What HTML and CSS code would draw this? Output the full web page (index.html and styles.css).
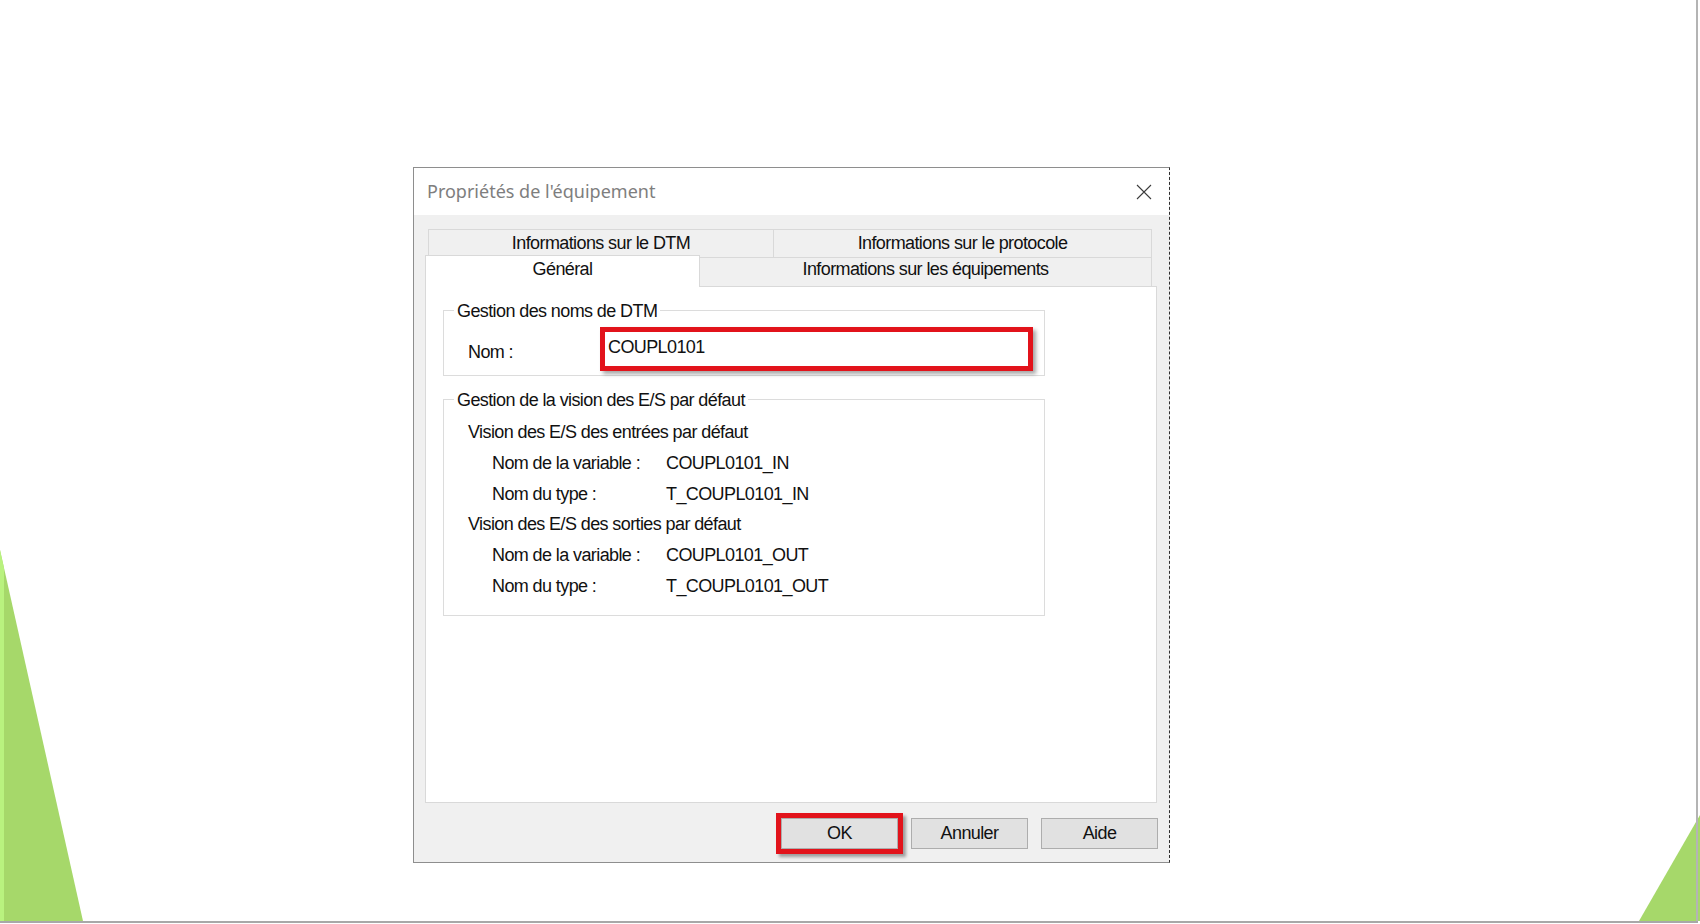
FILE: index.html
```html
<!DOCTYPE html>
<html lang="fr">
<head>
<meta charset="utf-8">
<title>Propriétés de l'équipement</title>
<link rel="stylesheet" href="styles.css">
</head>
<body>
<div class="slide">
  <svg class="deco" width="1700" height="924" viewBox="0 0 1700 924">
    <polygon points="0,550 83,921 0,921" fill="#a6d86a"/>
    <polygon points="0,550 4,568 4,921 0,921" fill="#b9f27f"/>
    <polygon points="1700,815 1700,921 1639,921" fill="#a6d86a"/>
    <rect x="1696" y="0" width="2" height="921" fill="#b4b4b4"/>
    <rect x="0" y="921" width="1698" height="2" fill="#a8a8a8"/>
  </svg>

  <div class="dialog">
    <div class="titlebar">
      <span class="title">Propriétés de l'équipement</span>
      <svg class="close" width="16" height="16" viewBox="0 0 16 16">
        <path d="M1 1 L15 15 M15 1 L1 15" stroke="#3c3c3c" stroke-width="1.1" fill="none"/>
      </svg>
    </div>
    <div class="body">
      <div class="tabrow back">
        <div class="tab t-dtm">Informations sur le DTM</div>
        <div class="tab t-proto">Informations sur le protocole</div>
      </div>
      <div class="tabrow front">
        <div class="tab active">Général</div>
        <div class="tab t-equip">Informations sur les équipements</div>
      </div>
      <div class="panel">
        <div class="group g1">
          <div class="legend">Gestion des noms de DTM</div>
          <div class="name-row">
            <span class="name-label">Nom :</span>
            <div class="name-input">COUPL0101</div>
          </div>
        </div>
        <div class="group g2">
          <div class="legend">Gestion de la vision des E/S par défaut</div>
          <div class="sub">Vision des E/S des entrées par défaut</div>
          <div class="kv"><span class="k">Nom de la variable :</span><span class="v">COUPL0101_IN</span></div>
          <div class="kv"><span class="k">Nom du type :</span><span class="v">T_COUPL0101_IN</span></div>
          <div class="sub">Vision des E/S des sorties par défaut</div>
          <div class="kv"><span class="k">Nom de la variable :</span><span class="v">COUPL0101_OUT</span></div>
          <div class="kv"><span class="k">Nom du type :</span><span class="v">T_COUPL0101_OUT</span></div>
        </div>
      </div>
      <div class="buttons">
        <div class="btn ok">OK</div>
        <div class="btn">Annuler</div>
        <div class="btn">Aide</div>
      </div>
    </div>
  </div>
</div>
</body>
</html>
```

FILE: styles.css
```css
html, body {
  margin: 0;
  padding: 0;
  background: #ffffff;
}

.slide {
  position: relative;
  width: 1700px;
  height: 924px;
  overflow: hidden;
  background: #ffffff;
  font-family: "Liberation Sans", Arial, sans-serif;
  font-size: 18px;
  letter-spacing: -0.6px;
  color: #111111;
}

.deco {
  position: absolute;
  left: 0;
  top: 0;
}

.dialog {
  position: relative;
  z-index: 1;
  margin-left: 413px;
  width: 755px;
  height: 694px;
  margin-top: 167px;
  display: inline-block;
  vertical-align: top;
  border: 1px solid #8e8e8e;
  border-right: 1px dashed #2e2e2e;
  background: #f0f0f0;
}

.titlebar {
  height: 47px;
  background: #ffffff;
  display: flex;
  align-items: center;
  justify-content: space-between;
  padding: 0 17px 0 13px;
}

.title {
  font-family: "Noto Sans", "Open Sans", sans-serif;
  font-size: 18px;
  letter-spacing: 0;
  line-height: 45px;
  color: #7e7e7e;
}

.close {
  display: block;
}

.body {
  padding-top: 14px;
  height: 633px;
  background: #f0f0f0;
}

.tabrow {
  display: flex;
}

.tabrow.back {
  margin-left: 14px;
  height: 28px;
}

.tab {
  box-sizing: border-box;
  text-align: center;
  background: #f0f0f0;
  border: 1px solid #d9d9d9;
  border-bottom: none;
}

.back .tab {
  line-height: 27px;
  height: 28px;
}

.t-dtm {
  width: 346px;
}

.t-proto {
  width: 378px;
  border-left: none;
}

.tabrow.front {
  margin-left: 11px;
  margin-top: -2px;
  height: 31px;
  align-items: flex-start;
}

.tab.active {
  position: relative;
  z-index: 2;
  width: 275px;
  height: 32px;
  background: #ffffff;
  line-height: 26px;
  padding-bottom: 4px;
}

.t-equip {
  width: 452px;
  height: 29px;
  margin-top: 2px;
  border-left: none;
  line-height: 23px;
}

.panel {
  position: relative;
  margin-left: 11px;
  width: 730px;
  height: 492px;
  background: #ffffff;
  border: 1px solid #d9d9d9;
  padding-top: 23px;
}

.group {
  margin-left: 17px;
  width: 600px;
  border: 1px solid #dcdcdc;
}

.legend {
  width: fit-content;
  margin: -10px 0 0 10px;
  padding: 0 3px;
  line-height: 20px;
  background: #ffffff;
}

.g1 {
  padding-bottom: 4px;
}

.name-row {
  display: flex;
  align-items: flex-start;
  margin-top: 6px;
  padding-left: 24px;
}

.name-label {
  width: 132px;
  line-height: 20px;
  margin-top: 15px;
}

.name-input {
  box-sizing: border-box;
  width: 433px;
  height: 44px;
  border: 5px solid #e2131b;
  background: #ffffff;
  padding: 5px 0 0 3px;
  line-height: 20px;
  box-shadow: 3px 3px 4px rgba(0, 0, 0, 0.35);
}

.g2 {
  margin-top: 23px;
  padding-bottom: 13px;
}

.g2 .legend {
  margin-bottom: 7px;
}

.sub {
  padding-left: 24px;
  line-height: 30.8px;
}

.kv {
  display: flex;
  padding-left: 48px;
  line-height: 30.8px;
}

.k {
  width: 174px;
}

.buttons {
  display: flex;
  justify-content: flex-end;
  gap: 13px;
  margin-top: 15px;
  padding-right: 11px;
}

.btn {
  box-sizing: border-box;
  width: 117px;
  height: 31px;
  background: #e1e1e1;
  border: 1px solid #adadad;
  text-align: center;
  line-height: 29px;
}

.btn.ok {
  box-shadow: 0 0 0 5px #e2131b, 3px 3px 3px 5px rgba(0, 0, 0, 0.35);
}
```
